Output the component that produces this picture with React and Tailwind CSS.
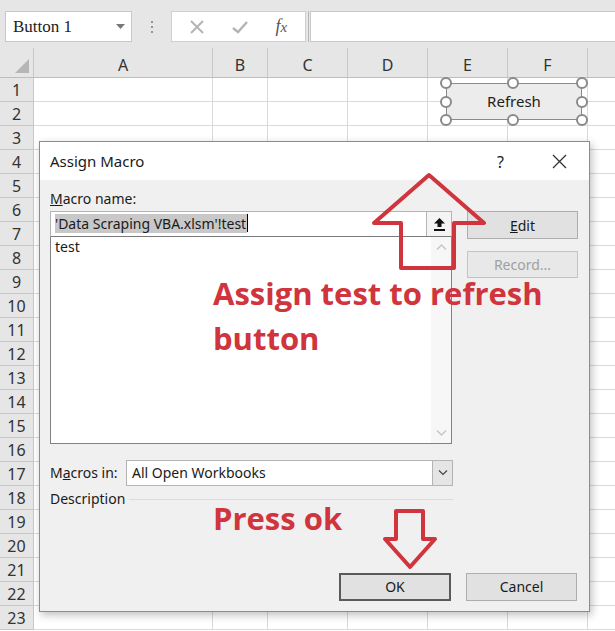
import React from 'react'

const cols = [
  { name: 'A', w: 'w-[179px]' },
  { name: 'B', w: 'w-[55px]' },
  { name: 'C', w: 'w-[80px]' },
  { name: 'D', w: 'w-[80px]' },
  { name: 'E', w: 'w-[80px]' },
  { name: 'F', w: 'w-[80px]' },
]

const rows = Array.from({ length: 23 }, (_, i) => i + 1)

const ui = { fontFamily: '"Noto Sans", "Open Sans", sans-serif' }
const note = { fontFamily: '"Open Sans", "Noto Sans", sans-serif' }

function FormulaBar() {
  return (
    <div className="h-[48px] bg-[#e6e6e6] flex items-start pt-[11px] pl-[5px]">
      <div className="w-[127px] h-[31px] bg-white border border-[#c8c8c8] flex items-center justify-between pl-[7px] pr-[6px]">
        <span className="text-[17px] text-[#222]" style={{ fontFamily: '"Liberation Serif", serif' }}>Button 1</span>
        <svg width="9" height="5" viewBox="0 0 9 5"><path d="M0 0 L9 0 L4.5 5 Z" fill="#777" /></svg>
      </div>
      <div className="w-[39px] h-[31px] flex flex-col items-center justify-center gap-[3px]">
        <div className="w-[2px] h-[2px] bg-[#a09090]" />
        <div className="w-[2px] h-[2px] bg-[#a09090]" />
        <div className="w-[2px] h-[2px] bg-[#a09090]" />
      </div>
      <div className="w-[135px] h-[31px] bg-white border border-[#d0d0d0] flex items-center justify-around px-[4px]">
        <svg width="14" height="14" viewBox="0 0 14 14"><path d="M1 1 L13 13 M13 1 L1 13" stroke="#b4b4b4" strokeWidth="2" /></svg>
        <svg width="16" height="14" viewBox="0 0 16 14"><path d="M1 8 L6 12 L15 2" stroke="#b4b4b4" strokeWidth="2.4" fill="none" /></svg>
        <span className="italic text-[18px] text-[#555]" style={{ fontFamily: '"Liberation Serif", serif' }}>
          f<span className="text-[15px]">x</span>
        </span>
      </div>
      <div className="w-[4px] h-[31px] flex justify-center">
        <div className="w-[1px] h-full bg-[#b8b8b8]" />
      </div>
      <div className="flex-1 h-[31px] bg-white border-y border-l border-[#c8c8c8]" />
    </div>
  )
}

function Grid() {
  return (
    <div className="text-[#333]" style={ui}>
      <div className="flex h-[30px] bg-[#e6e6e6] border-b border-[#bdbdbd]">
        <div className="w-[34px] h-full border-r border-[#c8c8c8] relative">
          <svg className="absolute right-[4px] bottom-[4px]" width="14" height="14" viewBox="0 0 14 14"><path d="M14 0 L14 14 L0 14 Z" fill="#b5b5b5" /></svg>
        </div>
        {cols.map(c => (
          <div key={c.name} className={`${c.w} h-full border-r border-[#c8c8c8] flex items-center justify-center pt-[5px] text-[16px]`}>{c.name}</div>
        ))}
        <div className="flex-1" />
      </div>
      {rows.map(r => (
        <div key={r} className="flex h-[24px]">
          <div className="w-[34px] h-full bg-[#e6e6e6] border-r border-b border-[#c8c8c8] flex items-center justify-center text-[16px]">{r}</div>
          {cols.map(c => (
            <div key={c.name} className={`${c.w} h-full bg-white border-r border-b border-[#dadada]`} />
          ))}
          <div className="flex-1 h-full bg-white border-b border-[#dadada]" />
        </div>
      ))}
    </div>
  )
}

function Handle({ x, y }) {
  return <div className="absolute w-[12px] h-[12px] rounded-full bg-white border-2 border-[#8a8a8a]" style={{ left: x - 6, top: y - 6 }} />
}

function RefreshButton() {
  return (
    <>
      <div className="absolute left-[446px] top-[83px] w-[136px] h-[37px] border border-[#8a8a8a] bg-[#ececec] flex items-center justify-center text-[15px] text-[#222]" style={ui}>
        Refresh
      </div>
      {[446, 513, 582].map(x => [83, 120].map(y => <Handle key={`${x}-${y}`} x={x} y={y} />))}
      <Handle x={446} y={102} />
      <Handle x={582} y={102} />
    </>
  )
}

function Btn({ children, className = '' }) {
  return (
    <div className={`bg-[#e1e1e1] border flex items-center justify-center text-[14px] ${className}`}>{children}</div>
  )
}

function Dialog() {
  return (
    <div className="absolute left-[39px] top-[141px] w-[551px] h-[471px] border border-[#8c8c8c] bg-[#f0f0f0] shadow-[2px_3px_8px_rgba(0,0,0,0.25)] text-[#1a1a1a]" style={ui}>
      <div className="h-[38px] bg-white flex items-center pl-[10px] relative">
        <span className="text-[15px]">Assign Macro</span>
        <span className="absolute left-[457px] top-[8px] text-[16px]">?</span>
        <svg className="absolute left-[512px] top-[12px]" width="15" height="15" viewBox="0 0 15 15"><path d="M1 1 L14 14 M14 1 L1 14" stroke="#333" strokeWidth="1.3" /></svg>
      </div>
      <div className="pt-[9px] px-[10px]">
        <div className="flex gap-[15px]">
          <div className="w-[402px] flex flex-col">
            <div className="h-[22px] text-[14px] leading-[20px]"><span className="underline">M</span>acro name:</div>
            <div className="h-[26px] bg-white border border-[#b4b4b4] border-b-[#7a7a7a] flex items-center pl-[4px] pb-[2px] relative">
              <span className="bg-[#c8c8c8] text-[14px] leading-[19px] pr-[1px]">'Data Scraping VBA.xlsm'!test</span>
              <div className="w-[1px] h-[18px] bg-black" />
              <div className="absolute right-[0px] top-[0px] w-[25px] h-[24px] bg-[#f4f4f4] border-l border-[#b4b4b4] flex items-center justify-center">
                <svg width="11" height="13" viewBox="0 0 11 13"><path d="M5.5 0 L11 5.5 L7.5 5.5 L7.5 9 L3.5 9 L3.5 5.5 L0 5.5 Z" fill="#111" /><rect x="0" y="11" width="11" height="2" fill="#111" /></svg>
              </div>
            </div>
            <div className="h-[207px] bg-white border border-t-0 border-[#828282] flex">
              <div className="flex-1 pl-[4px] text-[14px] leading-[20px]">test</div>
              <div className="w-[20px] h-full bg-[#f7f7f7] flex flex-col items-center justify-between py-[7px]">
                <svg width="11" height="6" viewBox="0 0 11 6"><path d="M1 5.5 L5.5 1 L10 5.5" stroke="#c4c4c4" strokeWidth="1.3" fill="none" /></svg>
                <svg width="11" height="6" viewBox="0 0 11 6"><path d="M1 0.5 L5.5 5 L10 0.5" stroke="#c4c4c4" strokeWidth="1.3" fill="none" /></svg>
              </div>
            </div>
          </div>
          <div className="w-[111px] flex flex-col pt-[22px] gap-[12px]">
            <Btn className="h-[28px] border-[#adadad]"><span><span className="underline">E</span>dit</span></Btn>
            <Btn className="h-[27px] border-[#c4c4c4] bg-[#e8e8e8] text-[#a0a0a0]">Record...</Btn>
          </div>
        </div>
        <div className="flex items-center mt-[16px]">
          <div className="w-[76px] text-[14px] pb-[2px]">M<span className="underline">a</span>cros in:</div>
          <div className="w-[327px] h-[26px] bg-white border border-[#b4b4b4] flex items-center">
            <span className="flex-1 pl-[5px] pb-[2px] text-[14px]">All Open Workbooks</span>
            <div className="w-[20px] h-full bg-[#e5e5e5] border-l border-[#b4b4b4] flex items-center justify-center">
              <svg width="10" height="6" viewBox="0 0 10 6"><path d="M1 0.5 L5 4.5 L9 0.5" stroke="#444" strokeWidth="1.2" fill="none" /></svg>
            </div>
          </div>
        </div>
        <div className="flex items-center w-[403px] mt-[2px] h-[22px]">
          <span className="text-[14px] pb-[2px]">Description</span>
          <div className="flex-1 ml-[4px] border-t border-[#dcdcdc]" />
        </div>
        <div className="flex justify-end gap-[15px] mt-[63px] pr-[2px]">
          <Btn className="w-[112px] h-[28px] border-2 border-[#5a5a5a] pb-[1px]">OK</Btn>
          <Btn className="w-[111px] h-[28px] border-[#adadad] pb-[1px]">Cancel</Btn>
        </div>
      </div>
    </div>
  )
}

function Notes() {
  return (
    <>
      <div className="absolute left-[213px] top-[271px] text-[#d0343c] text-[31px] font-bold leading-[45px]" style={note}>
        Assign test to refresh<br />button
      </div>
      <div className="absolute left-[213px] top-[496px] text-[#d0343c] text-[31px] font-bold leading-[45px]" style={note}>
        Press ok
      </div>
      <svg className="absolute left-0 top-0 pointer-events-none" width="615" height="631" viewBox="0 0 615 631">
        <path d="M429 175 L484 223 L454 223 L454 268 L401 268 L401 223 L374 223 Z" fill="none" stroke="#d0343c" strokeWidth="4" strokeLinejoin="round" />
        <path d="M396 511 L423 511 L423 539 L435 539 L410 567 L385 539 L396 539 Z" fill="none" stroke="#d0343c" strokeWidth="4" strokeLinejoin="round" />
      </svg>
    </>
  )
}

export default function App() {
  return (
    <div className="relative w-[615px] h-[631px] overflow-hidden bg-white">
      <FormulaBar />
      <Grid />
      <RefreshButton />
      <Dialog />
      <Notes />
    </div>
  )
}
